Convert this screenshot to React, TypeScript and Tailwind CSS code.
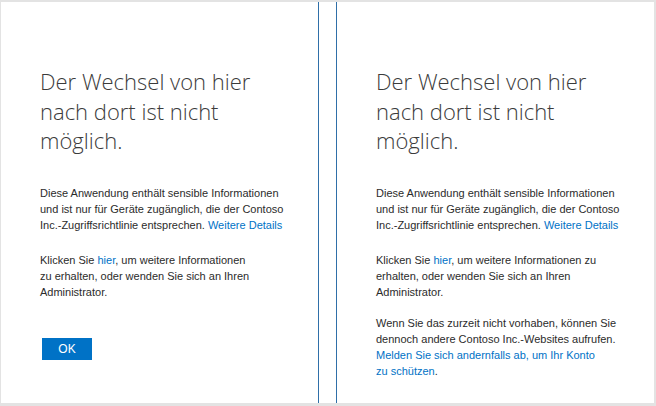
import type { ReactNode } from "react";

function Link({ children }: { children: ReactNode }) {
	return <span className="text-[#0072c6]">{children}</span>;
}

function Title() {
	return (
		<h1 className="font-['Open_Sans',sans-serif] text-[22px] font-light leading-[29.5px] text-[#3b3b3b]">
			Der Wechsel von hier
			<br />
			nach dort ist nicht
			<br />
			möglich.
		</h1>
	);
}

function Intro() {
	return (
		<p className="mt-[29px]">
			Diese Anwendung enthält sensible Informationen
			<br />
			und ist nur für Geräte zugänglich, die der Contoso
			<br />
			Inc.-Zugriffsrichtlinie entsprechen. <Link>Weitere Details</Link>
		</p>
	);
}

export default function App() {
	return (
		<div className="flex h-[406px] w-[656px] bg-[#e3e3e3] pt-[2px] pr-[2px] pb-[3px] pl-[1px] font-['Liberation_Sans',Arial,sans-serif] text-[11px] leading-[16px] text-[#2b2b2b]">
			<div className="flex flex-1 bg-white">
				<div className="w-[318px] border-r border-[#2f6fa8] pt-[65px] pl-[39px] whitespace-nowrap">
					<Title />
					<Intro />
					<p className="mt-[19px]">
						Klicken Sie <Link>hier</Link>, um weitere Informationen
						<br />
						zu erhalten, oder wenden Sie sich an Ihren
						<br />
						Administrator.
					</p>
					<button className="mt-[38px] ml-[2px] block h-[22px] w-[50px] bg-[#0072c6] text-[12px] text-white">
						OK
					</button>
				</div>
				<div className="w-[17px]" />
				<div className="w-[318px] border-l border-[#2f6fa8] pt-[65px] pl-[39px] whitespace-nowrap">
					<Title />
					<Intro />
					<p className="mt-[19px]">
						Klicken Sie <Link>hier</Link>, um weitere Informationen zu
						<br />
						erhalten, oder wenden Sie sich an Ihren
						<br />
						Administrator.
					</p>
					<p className="mt-[15px]">
						Wenn Sie das zurzeit nicht vorhaben, können Sie
						<br />
						dennoch andere Contoso Inc.-Websites aufrufen.
						<br />
						<Link>
							Melden Sie sich andernfalls ab, um Ihr Konto
							<br />
							zu schützen
						</Link>
						.
					</p>
				</div>
			</div>
		</div>
	);
}
